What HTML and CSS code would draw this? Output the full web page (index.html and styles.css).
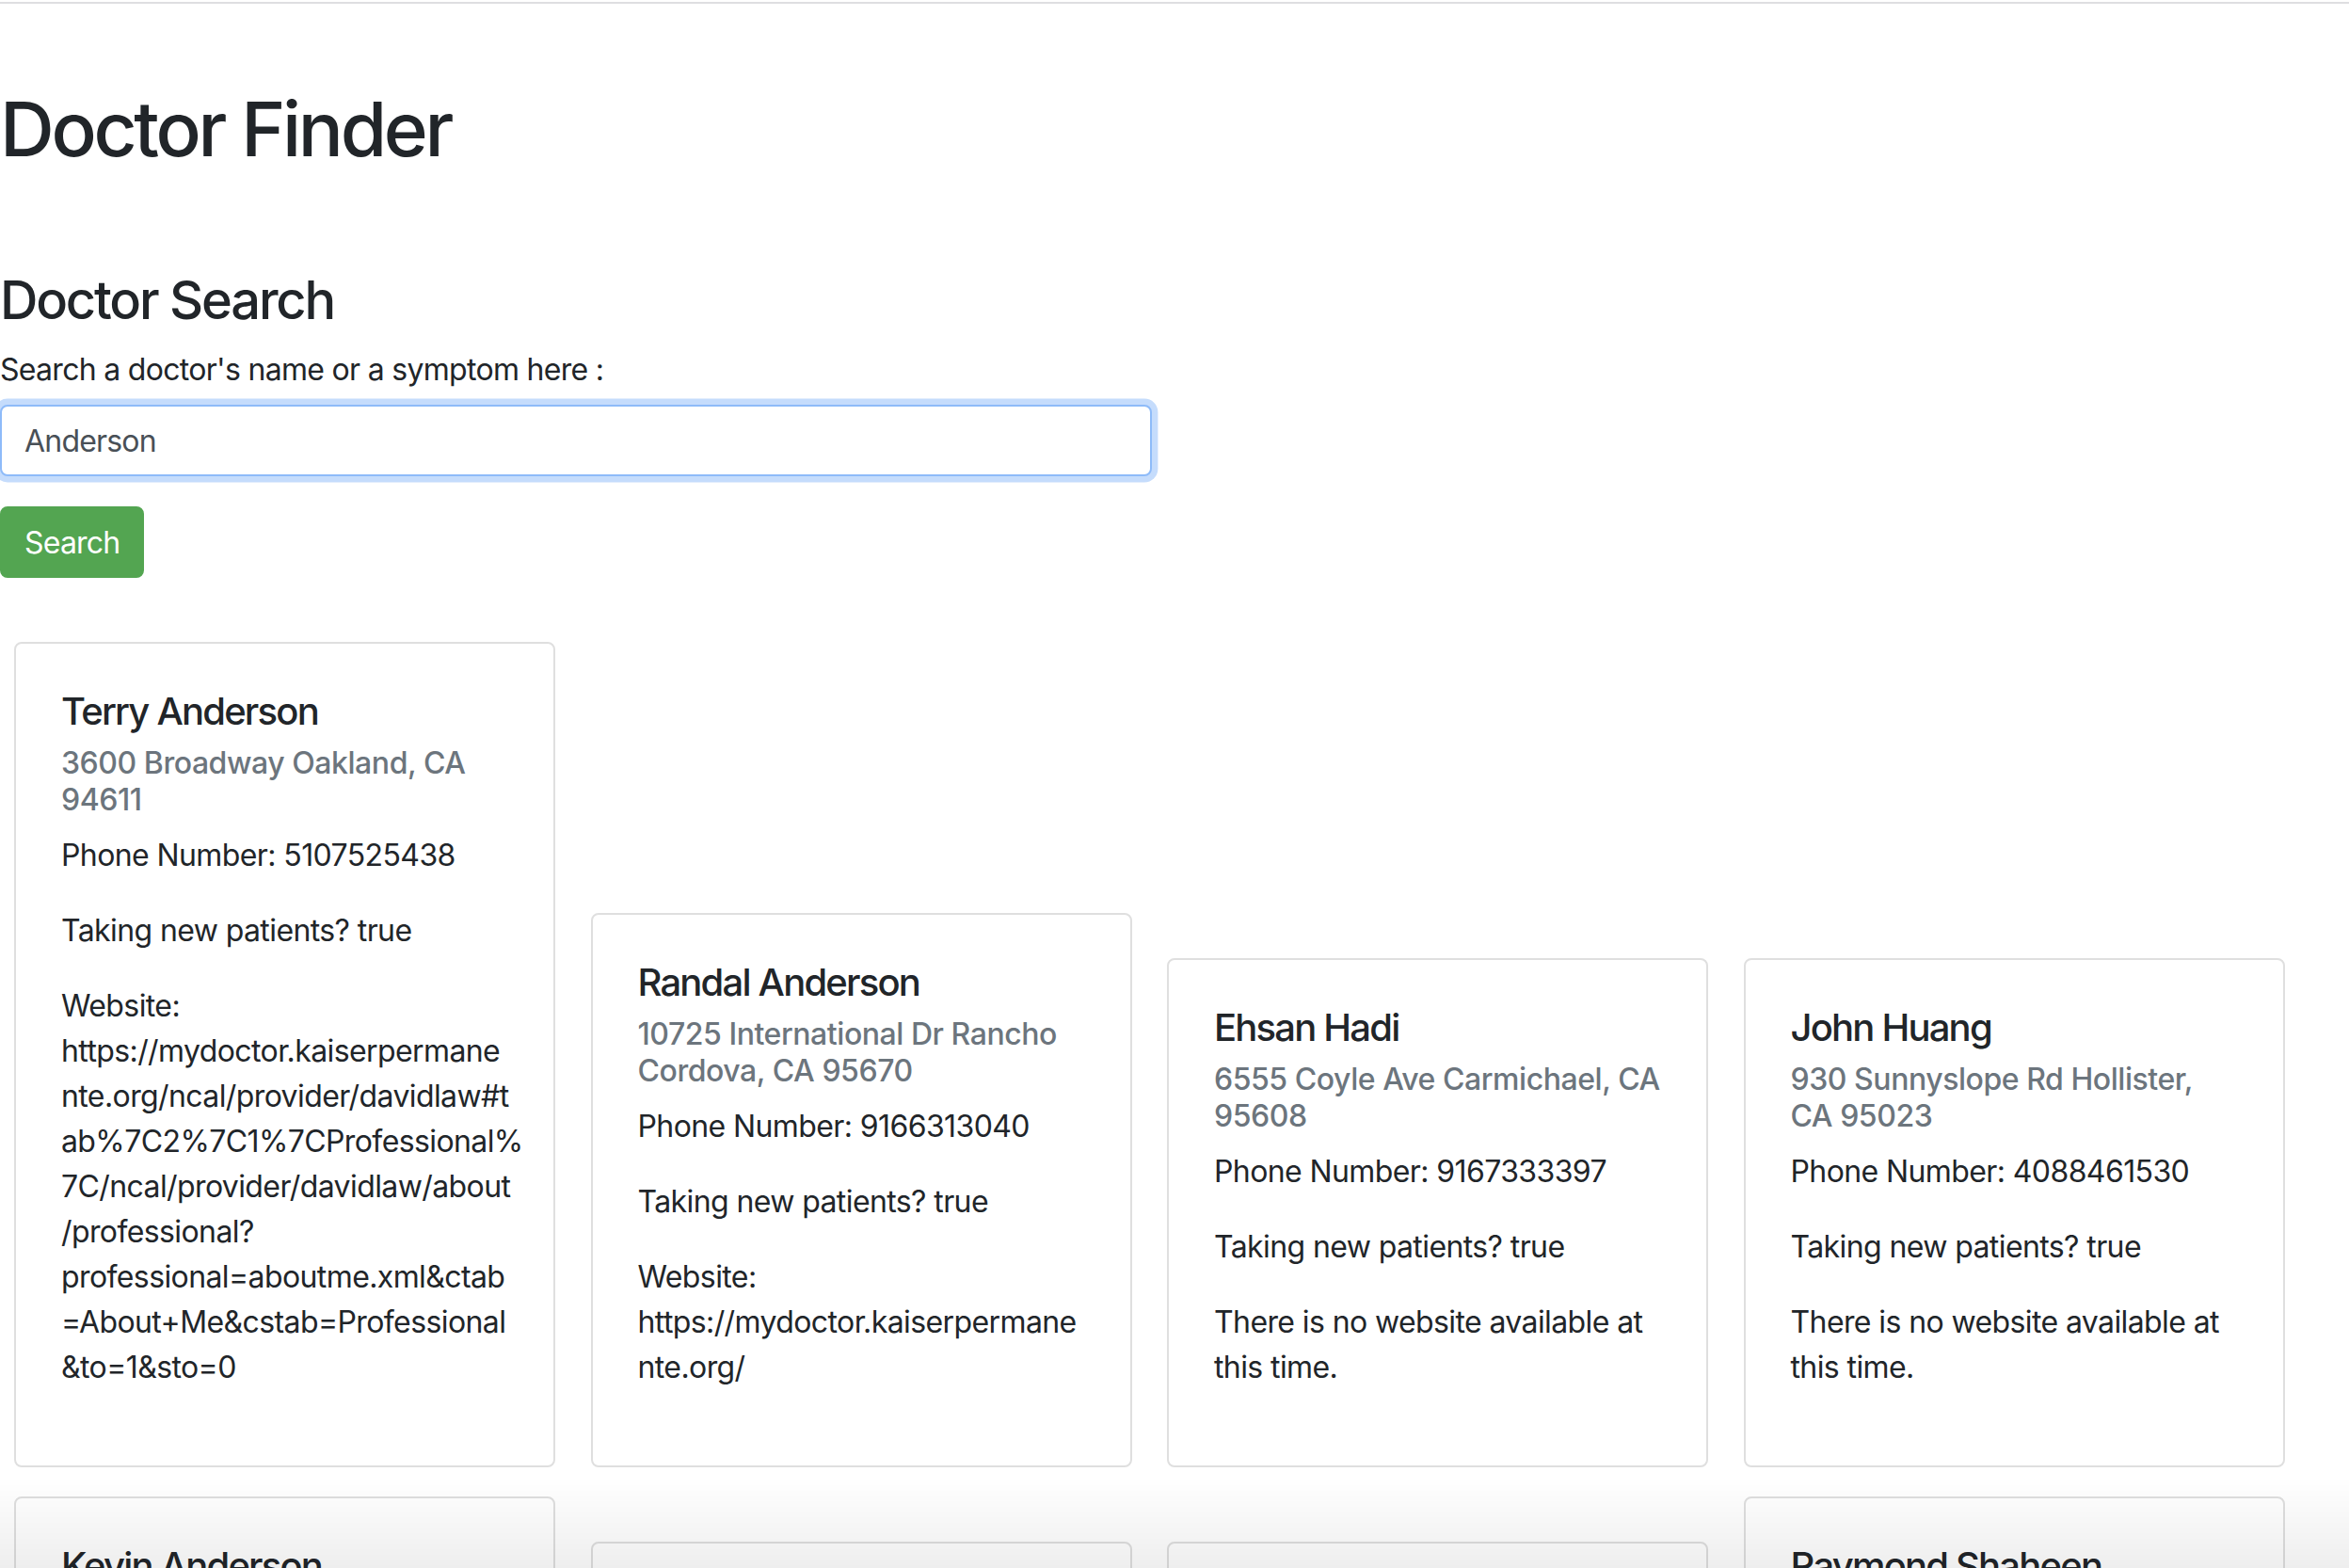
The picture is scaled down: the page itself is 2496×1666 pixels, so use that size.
FILE: index.html
```html
<!DOCTYPE html>
<html lang="en">
<head>
<meta charset="utf-8">
<title>Doctor Finder</title>
<link rel="stylesheet" href="styles.css">
</head>
<body>
<div class="topline"></div>
<main class="page">
  <h1 class="page-title">Doctor Finder</h1>
  <h2 class="section-title">Doctor Search</h2>
  <form class="search-form">
    <label class="search-label" for="q">Search a doctor's name or a symptom here :</label>
    <input class="search-input" id="q" type="text" value="Anderson">
    <button class="search-btn" type="button">Search</button>
  </form>

  <section class="results">
    <article class="card">
      <div class="card-body">
        <h5 class="card-title">Terry Anderson</h5>
        <h6 class="card-subtitle">3600 Broadway Oakland, CA<br>94611</h6>
        <p class="card-text">Phone Number: 5107525438</p>
        <p class="card-text">Taking new patients? true</p>
        <p class="card-text url">Website:<br>https://mydoctor.kaiserpermane<br>nte.org/ncal/provider/davidlaw#t<br>ab%7C2%7C1%7CProfessional%<br>7C/ncal/provider/davidlaw/about<br>/professional?<br>professional=aboutme.xml&amp;ctab<br>=About+Me&amp;cstab=Professional<br>&amp;to=1&amp;sto=0</p>
      </div>
    </article>
    <article class="card">
      <div class="card-body">
        <h5 class="card-title">Randal Anderson</h5>
        <h6 class="card-subtitle">10725 International Dr Rancho<br>Cordova, CA 95670</h6>
        <p class="card-text">Phone Number: 9166313040</p>
        <p class="card-text">Taking new patients? true</p>
        <p class="card-text url">Website:<br>https://mydoctor.kaiserpermane<br>nte.org/</p>
      </div>
    </article>
    <article class="card">
      <div class="card-body">
        <h5 class="card-title">Ehsan Hadi</h5>
        <h6 class="card-subtitle">6555 Coyle Ave Carmichael, CA<br>95608</h6>
        <p class="card-text">Phone Number: 9167333397</p>
        <p class="card-text">Taking new patients? true</p>
        <p class="card-text url">There is no website available at<br>this time.</p>
      </div>
    </article>
    <article class="card">
      <div class="card-body">
        <h5 class="card-title">John Huang</h5>
        <h6 class="card-subtitle">930 Sunnyslope Rd Hollister,<br>CA 95023</h6>
        <p class="card-text">Phone Number: 4088461530</p>
        <p class="card-text">Taking new patients? true</p>
        <p class="card-text url">There is no website available at<br>this time.</p>
      </div>
    </article>

    <article class="card">
      <div class="card-body">
        <h5 class="card-title">Kevin Anderson</h5>
        <h6 class="card-subtitle">1650 Response Rd Sacramento,<br>CA 95815</h6>
        <p class="card-text">Phone Number: 9165256300</p>
        <p class="card-text">Taking new patients? true</p>
        <p class="card-text url">Website:<br>https://mydoctor.kaiserpermane<br>nte.org/</p>
      </div>
    </article>
    <article class="card">
      <div class="card-body">
        <h5 class="card-title">Mark Anderson</h5>
        <h6 class="card-subtitle">2025 Morse Ave Sacramento, CA<br>95825</h6>
        <p class="card-text">Phone Number: 9169736600</p>
        <p class="card-text">Taking new patients? true</p>
        <p class="card-text url">There is no website available at<br>this time.</p>
      </div>
    </article>
    <article class="card">
      <div class="card-body">
        <h5 class="card-title">Susan Anderson</h5>
        <h6 class="card-subtitle">1 Quality Dr Vacaville, CA<br>95688</h6>
        <p class="card-text">Phone Number: 7076245000</p>
        <p class="card-text">Taking new patients? true</p>
        <p class="card-text url">There is no website available at<br>this time.</p>
      </div>
    </article>
    <article class="card">
      <div class="card-body">
        <h5 class="card-title">Raymond Shaheen</h5>
        <h6 class="card-subtitle">3600 Broadway Oakland, CA<br>94611</h6>
        <p class="card-text">Phone Number: 5107525000</p>
        <p class="card-text">Taking new patients? true</p>
        <p class="card-text url">Website:<br>https://mydoctor.kaiserpermane<br>nte.org/</p>
      </div>
    </article>
  </section>
</main>
<div class="bottom-shade"></div>
</body>
</html>
```
FILE: styles.css
```css
html, body {
  margin: 0;
  padding: 0;
  background: #ffffff;
}

body {
  font-family: Inter, "Helvetica Neue", Arial, sans-serif;
  font-size: 32px;
  line-height: 1.5;
  letter-spacing: -0.6px;
  color: #212529;
}

.topline {
  height: 2px;
  margin-top: 2px;
  background: #dedee1;
}

.page {
  padding: 0;
}

.page-title {
  font-size: 80px;
  font-weight: 500;
  line-height: 1.2;
  letter-spacing: -3.3px;
  margin: 85px 0 0 0;
}

.section-title {
  font-size: 56px;
  font-weight: 500;
  line-height: 1.2;
  letter-spacing: -2.2px;
  margin: 101px 0 16px 0;
}

.search-form {
  display: flex;
  flex-direction: column;
  align-items: flex-start;
}

.search-label {
  display: block;
  line-height: 48px;
  letter-spacing: -0.7px;
  margin-bottom: 13px;
}

.search-input {
  box-sizing: border-box;
  width: 1224px;
  height: 76px;
  padding: 0 24px;
  font-family: inherit;
  font-size: 32px;
  letter-spacing: -0.8px;
  color: #495057;
  background: #fff;
  border: 2px solid #8ebbf9;
  border-radius: 8px;
  box-shadow: 0 0 0 6.4px #c5dcfc;
  outline: none;
}

.search-btn {
  box-sizing: border-box;
  margin-top: 32px;
  height: 76px;
  padding: 0 24px;
  font-family: inherit;
  font-size: 32px;
  letter-spacing: -0.8px;
  color: #fff;
  background: #53a551;
  border: 2px solid #53a551;
  border-radius: 8px;
  cursor: pointer;
}

.results {
  display: flex;
  flex-wrap: wrap;
  align-items: flex-end;
  column-gap: 37.5px;
  row-gap: 31px;
  margin-top: 68px;
  padding-left: 15px;
}

.card {
  box-sizing: border-box;
  width: 575px;
  background: #fff;
  border: 2px solid #dfdfdf;
  border-radius: 8px;
  overflow-wrap: break-word;
}

.card-body {
  padding: 48px;
}

.card-title {
  font-size: 40px;
  font-weight: 500;
  line-height: 1.2;
  letter-spacing: -1.8px;
  margin: 0 0 24px 0;
  white-space: nowrap;
}

.card-subtitle {
  font-size: 32px;
  font-weight: 500;
  line-height: 1.2;
  letter-spacing: -0.45px;
  color: #6c757d;
  margin: -12px 0 16px 0;
  white-space: nowrap;
}

.card-text {
  margin: 0 0 32px 0;
  line-height: 48px;
  white-space: nowrap;
}

.bottom-shade {
  position: fixed;
  left: 0;
  right: 0;
  bottom: 0;
  height: 96px;
  background: linear-gradient(to bottom, rgba(0, 0, 0, 0), rgba(0, 0, 0, 0.065));
  pointer-events: none;
}
```
